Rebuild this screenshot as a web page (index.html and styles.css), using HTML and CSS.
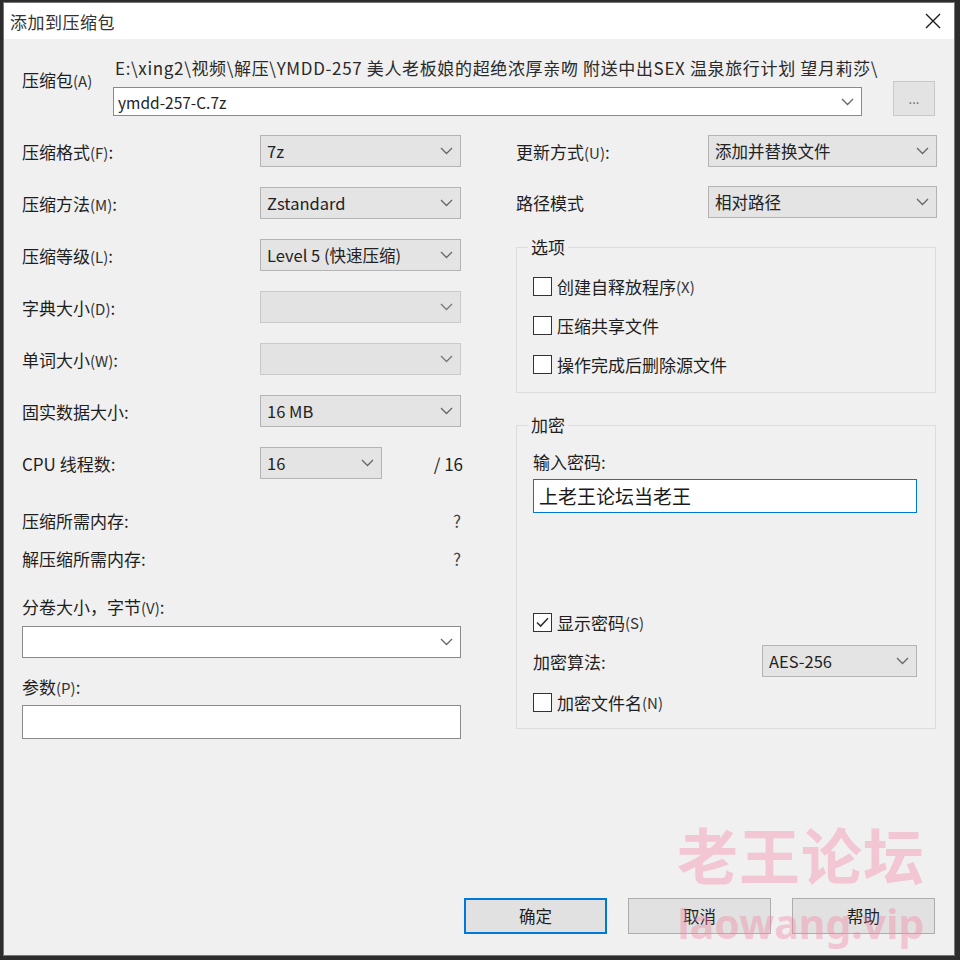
FILE: index.html
```html
<!DOCTYPE html>
<html lang="zh-CN">
<head>
<meta charset="utf-8">
<title>添加到压缩包</title>
<link rel="stylesheet" href="styles.css">
</head>
<body>
<div class="window">
  <div class="titlebar">
    <span class="title">添加到压缩包</span>
    <svg class="close" width="16" height="16" viewBox="0 0 16 16"><path d="M1 1L15 15M15 1L1 15" stroke="#1a1a1a" stroke-width="1.4" fill="none"/></svg>
  </div>
  <div class="content">
    <div class="archive">
      <span class="archive-label">压缩包<span class="hk">(A)</span></span>
      <span class="path">E:\xing2\视频\解压\YMDD-257 美人老板娘的超绝浓厚亲吻 附送中出SEX 温泉旅行计划 望月莉莎\</span>
      <div class="combo white edit"><span class="val">ymdd-257-C.7z</span><svg class="chev" width="13" height="8" viewBox="0 0 13 8"><path d="M1 1l5.5 5.5L12 1" fill="none" stroke="#666" stroke-width="1.3"/></svg></div>
      <div class="browse">...</div>
    </div>

    <div class="columns">
      <div class="left">
        <div class="form">
          <span class="lbl">压缩格式<span class="hk">(F)</span>:</span>
          <div class="combo"><span class="val">7z</span><svg class="chev" width="13" height="8" viewBox="0 0 13 8"><path d="M1 1l5.5 5.5L12 1" fill="none" stroke="#666" stroke-width="1.3"/></svg></div>
          <span class="lbl">压缩方法<span class="hk">(M)</span>:</span>
          <div class="combo"><span class="val">Zstandard</span><svg class="chev" width="13" height="8" viewBox="0 0 13 8"><path d="M1 1l5.5 5.5L12 1" fill="none" stroke="#666" stroke-width="1.3"/></svg></div>
          <span class="lbl">压缩等级<span class="hk">(L)</span>:</span>
          <div class="combo"><span class="val">Level 5 (快速压缩)</span><svg class="chev" width="13" height="8" viewBox="0 0 13 8"><path d="M1 1l5.5 5.5L12 1" fill="none" stroke="#666" stroke-width="1.3"/></svg></div>
          <span class="lbl">字典大小<span class="hk">(D)</span>:</span>
          <div class="combo disabled"><span class="val"></span><svg class="chev" width="13" height="8" viewBox="0 0 13 8"><path d="M1 1l5.5 5.5L12 1" fill="none" stroke="#777" stroke-width="1.3"/></svg></div>
          <span class="lbl">单词大小<span class="hk">(W)</span>:</span>
          <div class="combo disabled"><span class="val"></span><svg class="chev" width="13" height="8" viewBox="0 0 13 8"><path d="M1 1l5.5 5.5L12 1" fill="none" stroke="#777" stroke-width="1.3"/></svg></div>
          <span class="lbl">固实数据大小:</span>
          <div class="combo"><span class="val">16 MB</span><svg class="chev" width="13" height="8" viewBox="0 0 13 8"><path d="M1 1l5.5 5.5L12 1" fill="none" stroke="#666" stroke-width="1.3"/></svg></div>
          <span class="lbl">CPU 线程数:</span>
          <div class="cpu">
            <div class="combo small"><span class="val">16</span><svg class="chev" width="13" height="8" viewBox="0 0 13 8"><path d="M1 1l5.5 5.5L12 1" fill="none" stroke="#666" stroke-width="1.3"/></svg></div>
            <span class="total">/ 16</span>
          </div>
        </div>
        <div class="mem first"><span>压缩所需内存:</span><span>?</span></div>
        <div class="mem"><span>解压缩所需内存:</span><span>?</span></div>
        <div class="lbl-block split-lbl">分卷大小，字节<span class="hk">(V)</span>:</div>
        <div class="combo white field"><span class="val"></span><svg class="chev" width="13" height="8" viewBox="0 0 13 8"><path d="M1 1l5.5 5.5L12 1" fill="none" stroke="#666" stroke-width="1.3"/></svg></div>
        <div class="lbl-block param-lbl">参数<span class="hk">(P)</span>:</div>
        <div class="textbox"></div>
      </div>

      <div class="right">
        <div class="rrow">
          <span class="lbl">更新方式<span class="hk">(U)</span>:</span>
          <div class="combo rcombo"><span class="val">添加并替换文件</span><svg class="chev" width="13" height="8" viewBox="0 0 13 8"><path d="M1 1l5.5 5.5L12 1" fill="none" stroke="#666" stroke-width="1.3"/></svg></div>
        </div>
        <div class="rrow second">
          <span class="lbl">路径模式</span>
          <div class="combo rcombo"><span class="val">相对路径</span><svg class="chev" width="13" height="8" viewBox="0 0 13 8"><path d="M1 1l5.5 5.5L12 1" fill="none" stroke="#666" stroke-width="1.3"/></svg></div>
        </div>

        <div class="group options">
          <span class="group-title">选项</span>
          <label class="check first"><span class="box"></span>创建自释放程序<span class="hk">(X)</span></label>
          <label class="check"><span class="box"></span>压缩共享文件</label>
          <label class="check"><span class="box"></span>操作完成后删除源文件</label>
        </div>

        <div class="group encrypt">
          <span class="group-title">加密</span>
          <div class="pw-lbl">输入密码:</div>
          <div class="pw-input">上老王论坛当老王</div>
          <label class="check show"><span class="box"><svg width="17" height="17" viewBox="0 0 17 17"><path d="M3 8.5l3.6 3.6L14 4.2" fill="none" stroke="#333" stroke-width="1.6"/></svg></span>显示密码<span class="hk">(S)</span></label>
          <div class="algo">
            <span>加密算法:</span>
            <div class="combo acombo"><span class="val">AES-256</span><svg class="chev" width="13" height="8" viewBox="0 0 13 8"><path d="M1 1l5.5 5.5L12 1" fill="none" stroke="#666" stroke-width="1.3"/></svg></div>
          </div>
          <label class="check encname"><span class="box"></span>加密文件名<span class="hk">(N)</span></label>
        </div>
      </div>
    </div>

    <div class="buttons">
      <div class="btn default">确定</div>
      <div class="btn">取消</div>
      <div class="btn">帮助</div>
    </div>
  </div>

  <div class="watermark">
    <div class="wm-cn">老王论坛</div>
    <div class="wm-en">laowang.vip</div>
  </div>
</div>
</body>
</html>
```

FILE: styles.css
```css
html, body {
  margin: 0;
  padding: 0;
}
body {
  background: #2d2d2d;
  width: 960px;
  height: 960px;
  overflow: hidden;
  font-family: "Noto Sans CJK SC", "Microsoft YaHei", sans-serif;
  color: #1e1e1e;
}
.window {
  margin: 2px 0 0 3px;
  width: 952px;
  height: 954px;
  box-sizing: border-box;
  border: 1px solid #777;
  background: #f0f0f0;
  display: flex;
  flex-direction: column;
  position: relative;
  overflow: hidden;
}
.titlebar {
  height: 36px;
  flex: none;
  background: #fff;
  display: flex;
  align-items: center;
  justify-content: space-between;
  padding: 0 13px 0 6px;
}
.title {
  font-size: 17px;
  color: #333;
  letter-spacing: 0.5px;
}
.close {
  display: block;
}
.content {
  flex: 1;
  display: flex;
  flex-direction: column;
  padding: 19px 18px 21px 18px;
  font-size: 17px;
}
.hk {
  font-size: 15px;
  color: #333;
}
.archive {
  display: grid;
  grid-template-columns: 91px 749px 31px 42px;
  grid-template-rows: 20px 35px;
  row-gap: 3px;
}
.archive-label {
  grid-column: 1;
  grid-row: 1 / 3;
  align-self: start;
  margin-top: 11px;
  line-height: 22px;
}
.path {
  grid-column: 2 / 5;
  grid-row: 1;
  font-size: 17px;
  letter-spacing: 0.65px;
  line-height: 20px;
  margin-left: 2px;
  white-space: nowrap;
  color: #2a2a2a;
}
.combo {
  display: flex;
  align-items: center;
  justify-content: space-between;
  height: 32px;
  box-sizing: border-box;
  border: 1px solid #b4b4b4;
  background: #e4e4e4;
  padding: 0 7px 0 6px;
  font-size: 16.5px;
  color: #222;
}
.combo .val {
  white-space: nowrap;
}
.chev {
  display: block;
  flex: none;
}
.combo.white {
  background: #fff;
  border-color: #8a8a8a;
}
.combo.disabled {
  background: #e3e3e3;
  border-color: #cacaca;
}
.archive .edit {
  grid-column: 2;
  grid-row: 2;
  align-self: end;
  height: 29px;
  padding-left: 4px;
  font-size: 15.5px;
}
.browse {
  grid-column: 4;
  grid-row: 2;
  box-sizing: border-box;
  height: 35px;
  border: 1px solid #c8c8c8;
  background: #e3e3e3;
  color: #666;
  font-size: 13px;
  display: flex;
  align-items: center;
  justify-content: center;
}
.columns {
  display: flex;
  margin-top: 19px;
  gap: 55px;
}
.left {
  width: 439px;
  display: flex;
  flex-direction: column;
}
.form {
  display: grid;
  grid-template-columns: 238px 201px;
  grid-auto-rows: 32px;
  row-gap: 20px;
  align-items: center;
}
.lbl {
  white-space: nowrap;
}
.cpu {
  display: flex;
  align-items: center;
  justify-content: space-between;
  margin-right: -2px;
}
.combo.small {
  width: 122px;
}
.mem {
  display: flex;
  justify-content: space-between;
  line-height: 22px;
  margin-top: 16px;
}
.mem.first {
  margin-top: 31px;
}
.mem span:last-child {
  color: #444;
}
.lbl-block {
  line-height: 22px;
}
.split-lbl {
  margin-top: 26px;
}
.field {
  margin-top: 7px;
}
.param-lbl {
  margin-top: 18px;
}
.textbox {
  margin-top: 6px;
  height: 34px;
  box-sizing: border-box;
  border: 1px solid #8a8a8a;
  background: #fff;
}
.right {
  width: 420px;
  display: flex;
  flex-direction: column;
}
.rrow {
  display: flex;
  align-items: center;
  justify-content: space-between;
}
.rrow.second {
  margin-top: 19px;
}
.rcombo {
  width: 229px;
  margin-right: -1px;
}
.group {
  border: 1px solid #dcdcdc;
  display: flex;
  flex-direction: column;
  padding: 0 18px 0 16px;
}
.group-title {
  align-self: flex-start;
  margin: -11px 0 0 -5px;
  padding: 0 3px;
  line-height: 20px;
  background: #f0f0f0;
}
.options {
  margin-top: 29px;
  padding-bottom: 16px;
}
.check {
  display: flex;
  align-items: center;
  height: 24px;
  margin-top: 15px;
  white-space: nowrap;
}
.options .check.first {
  margin-top: 17px;
}
.box {
  width: 19px;
  height: 19px;
  box-sizing: border-box;
  border: 1px solid #333;
  background: #fff;
  margin-right: 5px;
  flex: none;
  display: flex;
  align-items: center;
  justify-content: center;
}
.encrypt {
  margin-top: 32px;
  padding-bottom: 14px;
}
.pw-lbl {
  margin-top: 16px;
  line-height: 22px;
}
.pw-input {
  margin-top: 6px;
  height: 34px;
  box-sizing: border-box;
  border: 1px solid #0078d7;
  background: #fff;
  font-size: 19px;
  line-height: 31px;
  padding-left: 5px;
  color: #1a1a1a;
}
.check.show {
  margin-top: 97px;
}
.algo {
  display: flex;
  align-items: center;
  justify-content: space-between;
  margin-top: 11px;
}
.acombo {
  width: 155px;
}
.check.encname {
  margin-top: 13px;
}
.buttons {
  margin-top: auto;
  display: flex;
  justify-content: flex-end;
  gap: 21px;
  padding-right: 1px;
}
.btn {
  width: 143px;
  height: 36px;
  box-sizing: border-box;
  border: 1px solid #adadad;
  background: #e1e1e1;
  display: flex;
  align-items: center;
  justify-content: center;
  font-size: 16.5px;
}
.btn.default {
  border: 2px solid #0078d7;
}
.watermark {
  position: absolute;
  left: 671px;
  top: 816px;
  width: 252px;
  pointer-events: none;
  color: rgba(244, 130, 160, 0.38);
  font-weight: 700;
  text-align: center;
}
.wm-cn {
  font-size: 61px;
  line-height: 70px;
  letter-spacing: 1px;
}
.wm-en {
  font-family: "Noto Sans", "Open Sans", sans-serif;
  font-size: 41px;
  line-height: 48px;
  margin-top: 10px;
}
```
